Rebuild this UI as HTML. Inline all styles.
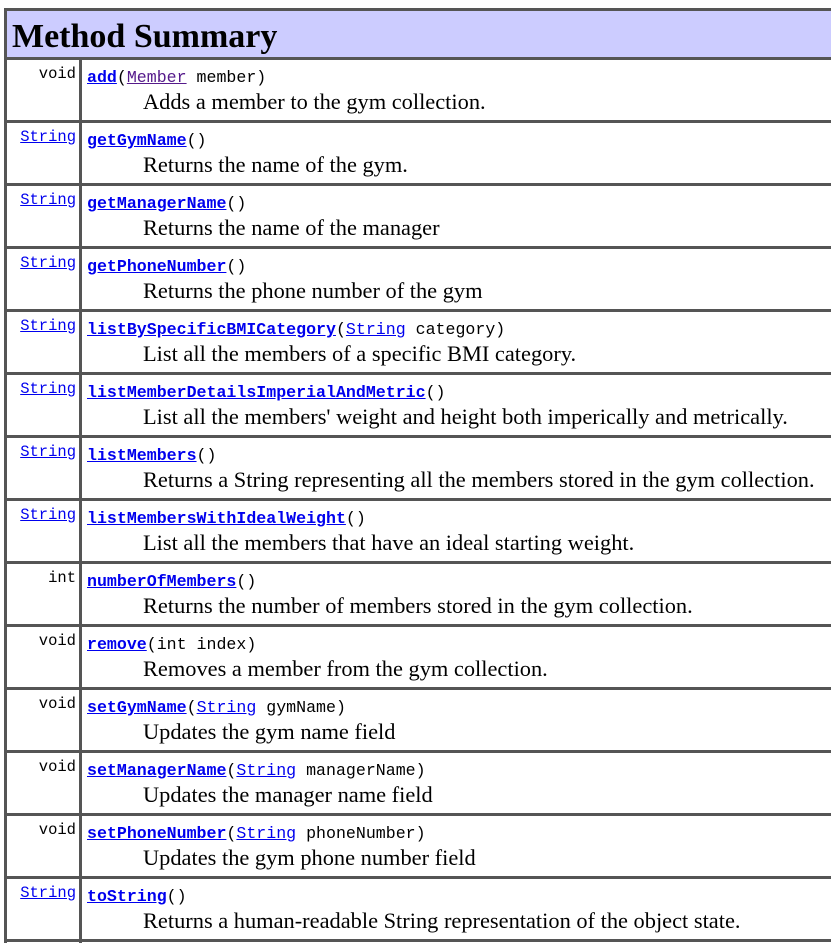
<!DOCTYPE html>
<html><head><meta charset="utf-8"><style>
body{margin:0;width:831px;height:948px;background:#fff;overflow:hidden;position:relative;font-family:"Liberation Serif",serif;}
.hl{position:absolute;left:4px;width:840px;height:3px;background:#555;border-bottom:0}
.vl{position:absolute;top:8px;width:3px;background:#555}
.hdr{position:absolute;left:7px;top:11px;width:830px;height:46px;background:#ccccff}
.hdr span{position:absolute;left:5px;top:9px;font-weight:bold;font-size:34px;line-height:1;color:#000}
.t{position:absolute;left:7px;width:69px;text-align:right;font-family:"Liberation Mono","DejaVu Sans Mono",monospace;font-size:15.5px;line-height:18px;color:#000}
.c{position:absolute;left:87px;white-space:nowrap;font-family:"Liberation Mono","DejaVu Sans Mono",monospace;font-size:16.6px;line-height:18px;color:#000}
.d{position:absolute;left:143px;white-space:nowrap;font-size:22.4px;line-height:22px;color:#000;margin-top:-1px}
a{color:#0000ee;text-decoration:underline}
a.v{color:#551a8b}
b a{font-weight:bold}
</style></head><body>
<div class="hdr"><span>Method Summary</span></div>
<div class="hl" style="top:8px"></div>
<div class="vl" style="left:4px;height:935px"></div>
<div class="vl" style="left:79px;top:57px;height:886px"></div>
<div class="hl" style="top:57px"></div>
<div class="hl" style="top:120px"></div>
<div class="hl" style="top:183px"></div>
<div class="hl" style="top:246px"></div>
<div class="hl" style="top:309px"></div>
<div class="hl" style="top:372px"></div>
<div class="hl" style="top:435px"></div>
<div class="hl" style="top:498px"></div>
<div class="hl" style="top:561px"></div>
<div class="hl" style="top:624px"></div>
<div class="hl" style="top:687px"></div>
<div class="hl" style="top:750px"></div>
<div class="hl" style="top:813px"></div>
<div class="hl" style="top:876px"></div>
<div class="hl" style="top:939px"></div>

<div class="t" style="top:65px">void</div>
<div class="c" style="top:69px"><b><a>add</a></b>(<a class="v">Member</a> member)</div>
<div class="d" style="top:92px">Adds a member to the gym collection.</div>

<div class="t" style="top:128px"><a>String</a></div>
<div class="c" style="top:132px"><b><a>getGymName</a></b>()</div>
<div class="d" style="top:155px">Returns the name of the gym.</div>

<div class="t" style="top:191px"><a>String</a></div>
<div class="c" style="top:195px"><b><a>getManagerName</a></b>()</div>
<div class="d" style="top:218px">Returns the name of the manager</div>

<div class="t" style="top:254px"><a>String</a></div>
<div class="c" style="top:258px"><b><a>getPhoneNumber</a></b>()</div>
<div class="d" style="top:281px">Returns the phone number of the gym</div>

<div class="t" style="top:317px"><a>String</a></div>
<div class="c" style="top:321px"><b><a>listBySpecificBMICategory</a></b>(<a>String</a> category)</div>
<div class="d" style="top:344px">List all the members of a specific BMI category.</div>

<div class="t" style="top:380px"><a>String</a></div>
<div class="c" style="top:384px"><b><a>listMemberDetailsImperialAndMetric</a></b>()</div>
<div class="d" style="top:407px">List all the members' weight and height both imperically and metrically.</div>

<div class="t" style="top:443px"><a>String</a></div>
<div class="c" style="top:447px"><b><a>listMembers</a></b>()</div>
<div class="d" style="top:470px">Returns a String representing all the members stored in the gym collection.</div>

<div class="t" style="top:506px"><a>String</a></div>
<div class="c" style="top:510px"><b><a>listMembersWithIdealWeight</a></b>()</div>
<div class="d" style="top:533px">List all the members that have an ideal starting weight.</div>

<div class="t" style="top:569px">int</div>
<div class="c" style="top:573px"><b><a>numberOfMembers</a></b>()</div>
<div class="d" style="top:596px">Returns the number of members stored in the gym collection.</div>

<div class="t" style="top:632px">void</div>
<div class="c" style="top:636px"><b><a>remove</a></b>(int index)</div>
<div class="d" style="top:659px">Removes a member from the gym collection.</div>

<div class="t" style="top:695px">void</div>
<div class="c" style="top:699px"><b><a>setGymName</a></b>(<a>String</a> gymName)</div>
<div class="d" style="top:722px">Updates the gym name field</div>

<div class="t" style="top:758px">void</div>
<div class="c" style="top:762px"><b><a>setManagerName</a></b>(<a>String</a> managerName)</div>
<div class="d" style="top:785px">Updates the manager name field</div>

<div class="t" style="top:821px">void</div>
<div class="c" style="top:825px"><b><a>setPhoneNumber</a></b>(<a>String</a> phoneNumber)</div>
<div class="d" style="top:848px">Updates the gym phone number field</div>

<div class="t" style="top:884px"><a>String</a></div>
<div class="c" style="top:888px"><b><a>toString</a></b>()</div>
<div class="d" style="top:911px">Returns a human-readable String representation of the object state.</div>
</body></html>
